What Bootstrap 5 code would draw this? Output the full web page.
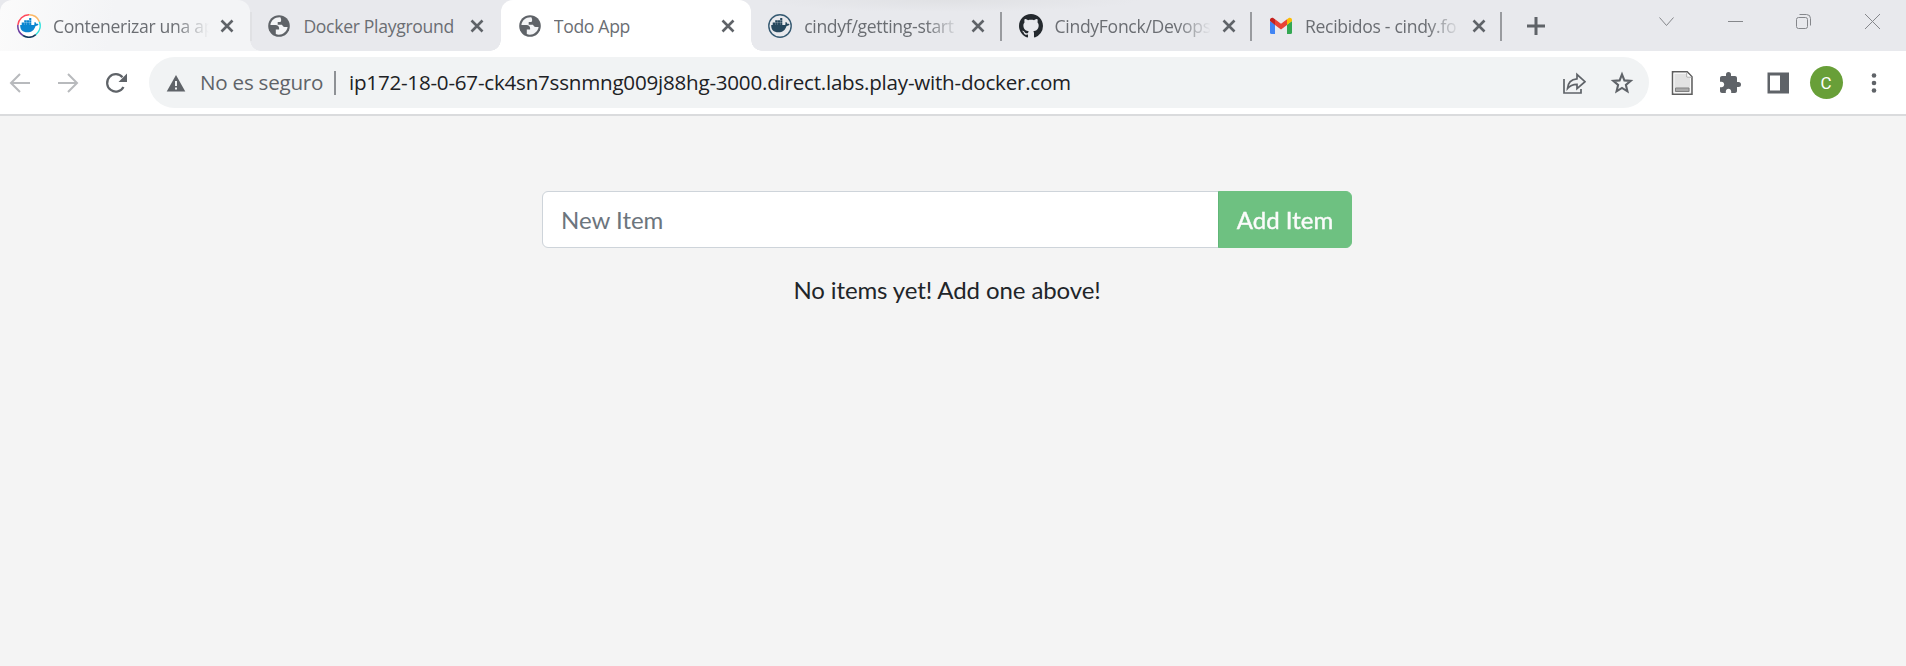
<!DOCTYPE html>
<html lang="es">
<head>
<meta charset="utf-8">
<title>Todo App</title>
<link rel="stylesheet" href="https://cdn.jsdelivr.net/npm/bootstrap@5.3.0/dist/css/bootstrap.min.css">
<style>
  body { background:#f4f4f4; font-family:Lato,"Liberation Sans",sans-serif; font-size:24px; color:#212529; overflow:hidden; }
  .chrome-ui { font-family:"Open Sans","Noto Sans",sans-serif; }
  .tab-strip { height:51px; background:radial-gradient(ellipse 190px 12px at 950px 0,#e0e1e4,#e8e9ed); color:#5f6368; }
  .tab-item { width:250.4px; height:51px; padding:0 13px 0 17px; position:relative; }
  .tab-item .fav { width:24px; height:24px; flex:none; }
  .tab-label { font-size:17.6px; line-height:24px; letter-spacing:-.32px; width:156px; margin-left:12px; overflow:hidden; white-space:nowrap; color:#6b6e73; }
  .fade-out { -webkit-mask-image:linear-gradient(90deg,#000 78%,transparent 100%); mask-image:linear-gradient(90deg,#000 78%,transparent 100%); }
  .tab-x { width:14px; height:14px; margin-left:11px; flex:none; }
  .tab-hover { background:linear-gradient(100deg,#fbfbfb,#f3f4f6 45%); border-radius:12px 12px 0 0; }
  .tab-current { background:#fff; border-radius:12px 12px 0 0; }
  .tab-hover::after,.tab-current::after,.tab-current::before { content:""; position:absolute; bottom:0; width:11px; height:11px; z-index:1; }
  .tab-hover::after { left:100%; background:radial-gradient(circle at 100% 0,transparent 10.5px,#f3f4f6 11px); }
  .tab-current::after { left:100%; background:radial-gradient(circle at 100% 0,transparent 10.5px,#fff 11px); }
  .tab-current::before { right:100%; background:radial-gradient(circle at 0 0,transparent 10.5px,#fff 11px); }
  .tab-divided { background:linear-gradient(#999b9f,#999b9f) right 0 top 12px/2px 29px no-repeat; }
  .tab-soft { background:linear-gradient(#e0e1e4,#e0e1e4) left 0 top 12px/2px 29px no-repeat; }
  .win-btns { margin-left:auto; padding:13px 25px 0 0; gap:51.6px; }
  .tool-bar { height:65px; background:#fff; border-bottom:2px solid #dadbdd; padding:0 20px 0 8px; color:#5f6368; }
  .tool-bar svg { flex:none; }
  .omni { width:1500px; height:51px; background:#f1f3f4; border-radius:26px; margin:0 21px; padding:0 15px 0 17px; font-size:20.6px; letter-spacing:-.23px; white-space:nowrap; }
  .omni-sec { width:123px; margin-left:14px; }
  .omni-rule { width:2px; height:24px; background:#8e9195; margin:0 13px 0 11px; }
  .omni-url { color:#202124; }
  .avatar { width:33px; height:33px; margin:0 -4.5px; border-radius:50%; background:#689f38; color:#fff; font:17px Roboto,sans-serif; }
  .page-area { width:1894px; padding-top:75px; }
  .page-area .container { max-width:1710px; --bs-gutter-x:45px; }
  .page-area .row { --bs-gutter-x:45px; }
  .todo-input { font-size:24px; line-height:36px; padding:9.5px 18px; border:1px solid #ced4da; border-radius:6px; height:57px; }
  .todo-input::placeholder { color:#6c757d; }
  .todo-add,.todo-add:disabled { font-size:24px; line-height:36px; padding:9.5px 16.5px; height:57px; width:135px; white-space:nowrap; border-radius:6px; background:#28a745; border-color:#28a745; color:#fff; opacity:.65; -webkit-text-stroke:.4px #fff; }
  .input-group > .todo-add { margin-left:0; width:134px; }
  .empty-note { letter-spacing:-.1px; }
</style>
</head>
<body>
<svg width="0" height="0" class="position-absolute" aria-hidden="true">
  <symbol id="i-x" viewBox="0 0 14 14"><path d="M1.500 1.500l11 11m0-11l-11 11" stroke="#5f6368" stroke-width="2.600" fill="none"/></symbol>
  <symbol id="i-globe" viewBox="0 0 24 24"><circle cx="12" cy="12" r="10.800" fill="#5f6368"/><path fill="#f3f4f6" d="M13.500 3.400C8 3 4 6.500 3.400 11H8.500c2.200 0 3.600 1.500 3.600 3.300v1.200H8.800v4.600c5.200 2 10.800-1.500 11.800-7.200h-3.100c-1 0-1.700-.5-2-1.300l-.6-.9h-4.200V8.100h2c1 0 1.400-.6 1.400-1.500V5.200z"/></symbol>
  <symbol id="i-whale" viewBox="0 0 24 24"><path d="M3.200 11h14c.4-.8.3-1.800.1-2.600l.8-.5c.8.5 1.200 1.200 1.300 2 .7-.1 1.500 0 2.100.4-.5 1.300-1.500 1.600-2.900 1.600-1.500 4.300-4 6.400-8.200 6.400-4.900 0-7.300-2.500-7.200-7.300z"/><path d="M4.700 8.400h2.300v2.800H4.700zm2.500 0h2.300v2.800H7.200zm2.500 0h2.300v2.800H9.700zm2.500 0h2.100v2.800h-2.100zM7.200 6.200h2.300v2H7.200zm2.500 0h2.300v2H9.700zm2.500 0h2.100v2h-2.100zm0-2.200h2.100v2h-2.100z"/></symbol>
</svg>

<header class="chrome-ui">
  <nav class="tab-strip d-flex">
    <div class="tab-item tab-hover d-flex align-items-center">
      <svg class="fav" viewBox="0 0 24 24"><g fill="none" stroke-width="1.500"><circle cx="12" cy="12" r="11.200" fill="#fff" stroke="none"/><path stroke="#ff4a5c" d="M.9 11A11.200 11.200 0 0 1 12 .8"/><path stroke="#fbb968" d="M12 .8a11.200 11.200 0 0 1 10.400 7"/><path stroke="#28e0dc" d="M22.400 7.800a11.200 11.200 0 0 1-3.600 12.800"/><path stroke="#11395c" d="M18.800 20.600A11.200 11.200 0 0 1 6 21.500"/><path stroke="#6b3fa0" d="M6 21.500A11.200 11.200 0 0 1 .9 11"/></g><use href="#i-whale" fill="#0b86d0"/></svg>
      <div class="tab-label fade-out">Contenerizar una apl</div>
      <svg class="tab-x"><use href="#i-x"/></svg>
    </div>
    <div class="tab-item tab-soft d-flex align-items-center">
      <svg class="fav"><use href="#i-globe"/></svg>
      <div class="tab-label">Docker Playground</div>
      <svg class="tab-x"><use href="#i-x"/></svg>
    </div>
    <div class="tab-item tab-current d-flex align-items-center">
      <svg class="fav"><use href="#i-globe"/></svg>
      <div class="tab-label">Todo App</div>
      <svg class="tab-x"><use href="#i-x"/></svg>
    </div>
    <div class="tab-item tab-divided d-flex align-items-center">
      <svg class="fav" viewBox="0 0 24 24"><circle cx="12" cy="12" r="11.200" fill="none" stroke="#365a72" stroke-width="1.400"/><use href="#i-whale" fill="#27485e"/></svg>
      <div class="tab-label fade-out">cindyf/getting-start</div>
      <svg class="tab-x"><use href="#i-x"/></svg>
    </div>
    <div class="tab-item tab-divided d-flex align-items-center">
      <svg class="fav" viewBox="0 0 16 16"><path fill="#24292e" d="M8 0C3.580 0 0 3.580 0 8c0 3.540 2.290 6.530 5.470 7.590.4.070.55-.17.55-.38 0-.19-.01-.82-.01-1.490-2.010.37-2.530-.49-2.690-.94-.09-.23-.48-.94-.82-1.130-.28-.15-.68-.52-.01-.53.63-.01 1.080.58 1.230.82.72 1.210 1.870.87 2.330.66.07-.52.28-.87.51-1.070-1.780-.2-3.640-.89-3.640-3.950 0-.87.31-1.590.82-2.150-.08-.2-.36-1.020.08-2.120 0 0 .67-.21 2.200.82.64-.18 1.320-.27 2-.27s1.360.09 2 .27c1.530-1.040 2.200-.82 2.200-.82.44 1.100.16 1.920.08 2.120.51.56.82 1.270.82 2.150 0 3.070-1.870 3.750-3.650 3.950.29.25.54.73.54 1.480 0 1.070-.01 1.930-.01 2.200 0 .21.15.46.55.38A8.010 8.010 0 0 0 16 8c0-4.420-3.580-8-8-8z"/></svg>
      <div class="tab-label fade-out">CindyFonck/Devops</div>
      <svg class="tab-x"><use href="#i-x"/></svg>
    </div>
    <div class="tab-item tab-divided d-flex align-items-center">
      <svg class="fav" viewBox="0 0 24 24"><path fill="#4285f4" d="M1 7l5 3.600V20H2.500A1.500 1.500 0 0 1 1 18.500z"/><path fill="#34a853" d="M18 10.600L23 7v11.500a1.500 1.500 0 0 1-1.500 1.500H18z"/><path fill="#ea4335" d="M6 5.300l6 4.500 6-4.500v5.600l-6 4.500-6-4.500z"/><path fill="#c5221f" d="M1 7V6c0-2 2.200-2.900 3.600-1.800L6 5.300v5.600z"/><path fill="#fbbc04" d="M18 5.300l1.400-1.100C20.800 3.100 23 4 23 6v1l-5 3.900z"/></svg>
      <div class="tab-label fade-out">Recibidos - cindy.fo</div>
      <svg class="tab-x"><use href="#i-x"/></svg>
    </div>
    <svg class="align-self-center ms-4" width="20" height="18" fill="none" stroke="#5f6368" stroke-width="3"><path d="M1 9h18M10 0v18"/></svg>
    <div class="win-btns d-flex">
      <svg width="17" height="17" fill="none" stroke="#85878b"><path d="M1.500 4.500l7 8 7-8"/></svg>
      <svg width="17" height="17" fill="none" stroke="#85878b"><path d="M1 8.500h15"/></svg>
      <svg width="17" height="17" fill="none" stroke="#85878b"><rect x="1.500" y="4.500" width="11" height="11" rx="2"/><path d="M4.500 1.500h7a4 4 0 0 1 4 4v7"/></svg>
      <svg width="17" height="17" fill="none" stroke="#85878b"><path d="M1 1l15 15M16 1L1 16"/></svg>
    </div>
  </nav>

  <div class="tool-bar d-flex align-items-center">
    <svg width="24" height="24" class="me-4" fill="none" stroke="#b8babd" stroke-width="2"><path d="M22 12H3.500M12 3l-9 9 9 9"/></svg>
    <svg width="24" height="24" class="me-4" fill="none" stroke="#b8babd" stroke-width="2"><path d="M2 12h18.500M12 3l9 9-9 9"/></svg>
    <svg width="24" height="24"><path d="M19.500 16A8.700 8.700 0 1 1 18.500 6.300" fill="none" stroke="#5f6368" stroke-width="2.200"/><path d="M23 2.500v8.500h-8.500z" fill="#5f6368"/></svg>
    <div class="omni d-flex align-items-center">
      <svg width="20" height="18" viewBox="0 0 20 18"><path fill="#5f6368" d="M10 1l9.300 16.500H.7z"/><path fill="#f1f3f4" d="M9 7h2v5H9zm0 6.500h2v2H9z"/></svg>
      <span class="omni-sec">No es seguro</span>
      <span class="omni-rule"></span>
      <span class="omni-url">ip172-18-0-67-ck4sn7ssnmng009j88hg-3000.direct.labs.play-with-docker.com</span>
      <svg class="ms-auto me-4" width="24" height="24" fill="none" stroke="#5f6368" stroke-width="1.700"><path d="M2 8v14h17v-4"/><path d="M5.500 17.500c.5-6 4-9.300 9.500-9.700V3.500l8 7.200-8 7V13.300c-4 0-7 1-9.500 4.200z"/></svg>
      <svg width="24" height="24" fill="none" stroke="#5f6368" stroke-width="2.100"><path d="M12 3.400l2.400 6 6.300.5-4.800 4.100 1.500 6.300-5.400-3.400-5.400 3.400L8.100 14 3.300 9.900l6.300-.5z"/></svg>
    </div>
    <svg width="24" height="26" class="me-4" viewBox="0 0 24 26"><path d="M2.500 1.800h14.700l4.800 5v17.400H2.500z" fill="#e2e2e2" stroke="#5e5e5e" stroke-width="1.500"/><path d="M4 3.300h12.500v4.200h4v15.200H4z" fill="none" stroke="#fafafa"/><path d="M16.700 2.500v4.700h4.800" fill="#fff" stroke="#aaa"/><path d="M5.500 18h13.500v3.500H5.500z" fill="#aaa" stroke="#818181"/></svg>
    <svg width="24" height="24" class="me-4" viewBox="0 0 24 24"><path fill="#5f6368" d="M20.500 11H19V7c0-1.100-.9-2-2-2h-4V3.500a2.500 2.500 0 0 0-5 0V5H4c-1.100 0-1.990.9-1.990 2v3.800H3.500c1.490 0 2.700 1.210 2.700 2.700s-1.210 2.700-2.700 2.700H2V20c0 1.100.9 2 2 2h3.800v-1.500c0-1.490 1.210-2.700 2.700-2.700s2.700 1.210 2.700 2.700V22H17c1.100 0 2-.9 2-2v-4h1.500a2.500 2.500 0 0 0 0-5z"/></svg>
    <svg width="24" height="24" class="me-4"><path fill="#5f6368" fill-rule="evenodd" d="M1.500 1.500h21.500v21H1.500zM4 4.500v15h10v-15z"/></svg>
    <div class="avatar d-flex align-items-center justify-content-center">C</div>
    <svg width="24" height="24" class="ms-4" fill="#5f6368"><circle cx="12" cy="4.500" r="2.300"/><circle cx="12" cy="12" r="2.300"/><circle cx="12" cy="19.500" r="2.300"/></svg>
  </div>
</header>

<main class="page-area">
  <div class="container">
    <div class="row">
      <div class="col-6 offset-3">
        <div class="input-group mb-4">
          <input type="text" class="form-control todo-input" placeholder="New Item" aria-label="New Item">
          <button class="btn btn-success todo-add" disabled>Add Item</button>
        </div>
        <p class="text-center mb-0 empty-note">No items yet! Add one above!</p>
      </div>
    </div>
  </div>
</main>
<script src="https://cdn.jsdelivr.net/npm/bootstrap@5.3.0/dist/js/bootstrap.bundle.min.js"></script>
</body>
</html>
